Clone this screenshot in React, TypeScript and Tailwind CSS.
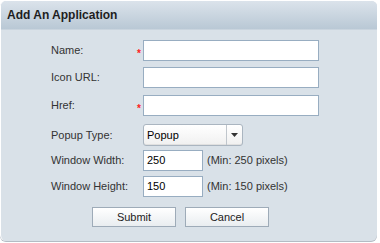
import React from "react";

const font = { fontFamily: '"Liberation Sans", Arial, sans-serif' };

function Label({ children }: { children: React.ReactNode }) {
  return <div className="w-[86px] shrink-0 text-[11px] text-[#333]">{children}</div>;
}

function Req({ on }: { on?: boolean }) {
  return (
    <div className="w-[6px] h-full shrink-0 flex items-center">
      {on ? (
        <span className="text-[10px] font-bold leading-none text-[#ff2020] mt-[7px]">*</span>
      ) : null}
    </div>
  );
}

function TextInput({ w, value }: { w: string; value?: string }) {
  return (
    <div
      className={`${w} h-[21px] shrink-0 border border-[#98adc1] bg-white pl-[3px] flex items-center text-[11px] text-black`}
    >
      {value}
    </div>
  );
}

export default function App() {
  return (
    <div className="w-[380px] h-[243px] bg-white" style={font}>
      <div className="w-[377px] h-[241px] rounded-[6px] bg-[#d9e1e8] border-t border-l border-white shadow-[0_1px_0_#b4bcc4] overflow-hidden flex flex-col">
        <div className="h-[29px] shrink-0 bg-gradient-to-b from-[#dbe3eb] to-[#b9c8d5] flex items-center px-[6px] border-b border-[#c9d4de]">
          <span className="text-[12px] font-bold text-[#1e1e1e]">Add An Application</span>
        </div>
        <div className="flex flex-col pl-[50px] pt-[10px]">
          <div className="flex items-center h-[21px]">
            <Label>Name:</Label>
            <Req on />
            <TextInput w="w-[176px]" />
          </div>
          <div className="flex items-center h-[21px] mt-[6px]">
            <Label>Icon URL:</Label>
            <Req />
            <TextInput w="w-[176px]" />
          </div>
          <div className="flex items-center h-[21px] mt-[7px]">
            <Label>Href:</Label>
            <Req on />
            <TextInput w="w-[176px]" />
          </div>
          <div className="flex items-center h-[22px] mt-[8px]">
            <Label>Popup Type:</Label>
            <Req />
            <div className="w-[100px] h-[22px] rounded-[3px] border border-[#aab5c0] bg-gradient-to-b from-white to-[#f0f0f0] flex shadow-[inset_0_-1px_0_#e0e0e0]">
              <div className="flex-1 flex items-center pl-[3px] text-[11px] text-black">Popup</div>
              <div className="w-[16px] border-l border-[#c0c6cc] flex items-center justify-center">
                <svg width="7" height="4" viewBox="0 0 7 4">
                  <path d="M0 0H7L3.5 4Z" fill="#333" />
                </svg>
              </div>
            </div>
          </div>
          <div className="flex items-center h-[21px] mt-[4px]">
            <Label>Window Width:</Label>
            <Req />
            <TextInput w="w-[60px]" value="250" />
            <span className="ml-[4px] text-[11px] text-[#333]">(Min: 250 pixels)</span>
          </div>
          <div className="flex items-center h-[21px] mt-[5px]">
            <Label>Window Height:</Label>
            <Req />
            <TextInput w="w-[60px]" value="150" />
            <span className="ml-[4px] text-[11px] text-[#333]">(Min: 150 pixels)</span>
          </div>
          <div className="flex items-center mt-[10px] pl-[41px] gap-[9px]">
            <button className="w-[84px] h-[20px] border border-[#9eabb8] bg-gradient-to-b from-white to-[#e9edf0] text-[11px] text-[#222]">
              Submit
            </button>
            <button className="w-[84px] h-[20px] border border-[#9eabb8] bg-gradient-to-b from-white to-[#e9edf0] text-[11px] text-[#222]">
              Cancel
            </button>
          </div>
        </div>
      </div>
    </div>
  );
}
